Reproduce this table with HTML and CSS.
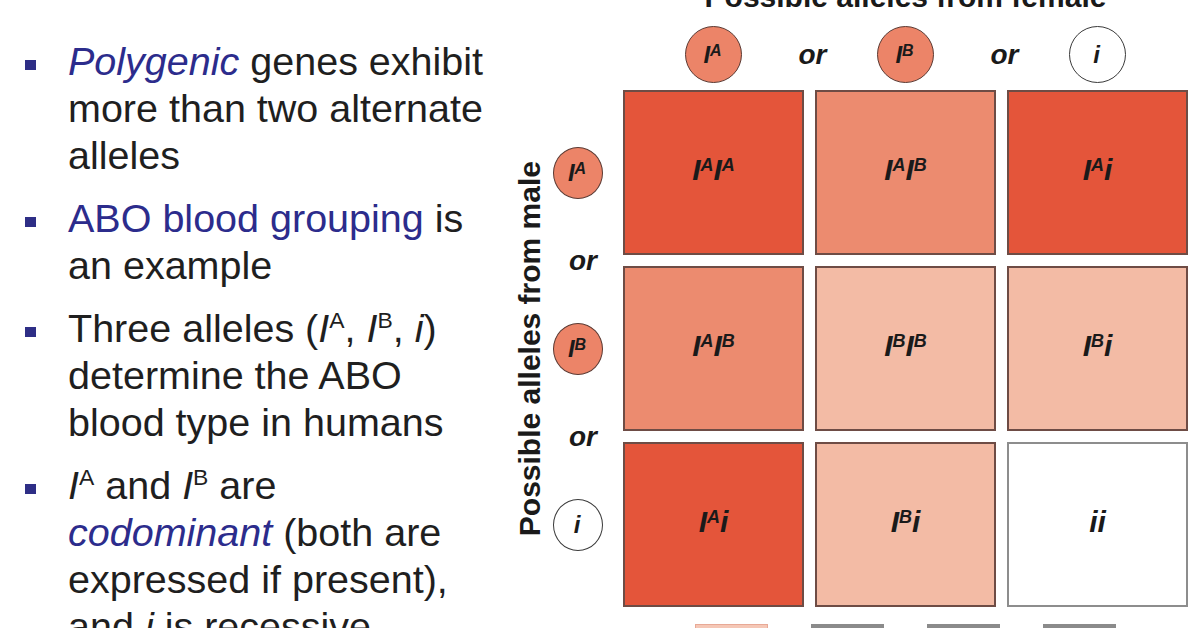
FILE: index.html
```html
<!DOCTYPE html>
<html lang="en">
<head>
<meta charset="utf-8">
<title>ABO blood grouping</title>
<link rel="stylesheet" href="styles.css">
</head>
<body>
<div class="slide">
  <ul class="points">
    <li class="point"><span class="bullet"></span><p class="text"><em class="key">Polygenic</em> genes exhibit<br>more than two alternate<br>alleles</p></li>
    <li class="point"><span class="bullet"></span><p class="text"><span class="key">ABO blood grouping</span> is<br>an example</p></li>
    <li class="point"><span class="bullet"></span><p class="text">Three alleles (<i>I</i><sup class="sup">A</sup>, <i>I</i><sup class="sup">B</sup>, <i>i</i>)<br>determine the ABO<br>blood type in humans</p></li>
    <li class="point"><span class="bullet"></span><p class="text"><i>I</i><sup class="sup">A</sup> and <i>I</i><sup class="sup">B</sup> are<br><em class="key">codominant</em> (both are<br>expressed if present),<br>and <i>i</i> is recessive</p></li>
  </ul>

  <div class="punnett">
    <div class="title">Possible alleles from female</div>

    <div class="top col1"><span class="allele red"><span class="lbl">I<sup class="asup">A</sup></span></span></div>
    <div class="top-or gap1"><span class="or">or</span></div>
    <div class="top col2"><span class="allele red"><span class="lbl">I<sup class="asup">B</sup></span></span></div>
    <div class="top-or gap2"><span class="or">or</span></div>
    <div class="top col3"><span class="allele white"><span class="lbl">i</span></span></div>

    <div class="male">Possible alleles from male</div>

    <div class="side row1"><span class="allele small red"><span class="lbl">I<sup class="asup">A</sup></span></span></div>
    <div class="side-or rgap1"><span class="or">or</span></div>
    <div class="side row2"><span class="allele small red"><span class="lbl">I<sup class="asup">B</sup></span></span></div>
    <div class="side-or rgap2"><span class="or">or</span></div>
    <div class="side row3"><span class="allele small white"><span class="lbl">i</span></span></div>

    <div class="cell row1 col1 dark"><span class="geno">I<sup class="csup">A</sup>I<sup class="csup">A</sup></span></div>
    <div class="cell row1 col2 mid"><span class="geno">I<sup class="csup">A</sup>I<sup class="csup">B</sup></span></div>
    <div class="cell row1 col3 dark"><span class="geno">I<sup class="csup">A</sup>i</span></div>

    <div class="cell row2 col1 mid"><span class="geno">I<sup class="csup">A</sup>I<sup class="csup">B</sup></span></div>
    <div class="cell row2 col2 light"><span class="geno">I<sup class="csup">B</sup>I<sup class="csup">B</sup></span></div>
    <div class="cell row2 col3 light"><span class="geno">I<sup class="csup">B</sup>i</span></div>

    <div class="cell row3 col1 dark"><span class="geno">I<sup class="csup">A</sup>i</span></div>
    <div class="cell row3 col2 light"><span class="geno">I<sup class="csup">B</sup>i</span></div>
    <div class="cell row3 col3 blank"><span class="geno">ii</span></div>

    <div class="legend">
      <span class="swatch pink"></span>
      <span class="swatch grey"></span>
      <span class="swatch grey"></span>
      <span class="swatch grey"></span>
    </div>
  </div>
</div>
</body>
</html>
```

FILE: styles.css
```css
html, body {
  margin: 0;
  padding: 0;
  width: 1196px;
  height: 628px;
  overflow: hidden;
  background: #ffffff;
}

.slide {
  display: flex;
  align-items: flex-start;
  width: 1196px;
  height: 628px;
  font-family: "Liberation Sans", Arial, sans-serif;
  color: #1f1f1f;
}

/* ---------- left text ---------- */
.points {
  flex: none;
  width: 505px;
  margin: 0;
  padding: 38px 0 0 25px;
  box-sizing: border-box;
  list-style: none;
  display: flex;
  flex-direction: column;
  gap: 16px;
}

.point {
  display: flex;
  align-items: flex-start;
  gap: 32px;
}

.bullet {
  flex: none;
  width: 11px;
  height: 10px;
  margin-top: 22px;
  background: #2e2e86;
}

.text {
  margin: 0;
  font-size: 39.5px;
  line-height: 47px;
  white-space: nowrap;
  color: #1f1f1f;
}

.key {
  color: #2c2c8c;
}

.sup {
  font-size: 0.58em;
  line-height: 0;
  vertical-align: 0.62em;
}

/* ---------- punnett square ---------- */
.punnett {
  flex: none;
  margin-top: -18px;
  display: grid;
  grid-template-columns: 48px 50px 20px 181px 11px 181px 11px 181px;
  grid-template-rows: 30px 78px 165px 11px 165px 11px 165px auto;
}

.title {
  grid-column: 4 / 9;
  grid-row: 1;
  text-align: center;
  font-weight: bold;
  font-size: 30px;
  line-height: 30px;
  white-space: nowrap;
  color: #1a1a1a;
}

.col1 { grid-column: 4; }
.col2 { grid-column: 6; }
.col3 { grid-column: 8; }
.gap1 { grid-column: 5; }
.gap2 { grid-column: 7; }
.row1 { grid-row: 3; }
.row2 { grid-row: 5; }
.row3 { grid-row: 7; }
.rgap1 { grid-row: 4; }
.rgap2 { grid-row: 6; }

.top {
  grid-row: 2;
  display: flex;
  justify-content: center;
  align-items: flex-end;
  padding-bottom: 7px;
}

.top-or {
  grid-row: 2;
  display: flex;
  justify-content: center;
  align-items: flex-end;
  padding-bottom: 7px;
  padding-left: 6px;
}

.top-or .or {
  height: 56px;
  line-height: 56px;
}

.side {
  grid-column: 2;
  display: flex;
  justify-content: center;
  align-items: center;
}

.side-or {
  grid-column: 2;
  display: flex;
  justify-content: center;
  align-items: center;
  padding-left: 10px;
}

.or {
  font-weight: bold;
  font-style: italic;
  font-size: 28px;
  color: #1a1a1a;
  white-space: nowrap;
}

.allele {
  box-sizing: border-box;
  width: 57px;
  height: 57px;
  border-radius: 50%;
  border: 1.5px solid #5b3a33;
  display: flex;
  justify-content: center;
  align-items: center;
  color: #1a1a1a;
}

.allele.small {
  width: 52px;
  height: 52px;
}

.allele.red {
  background: #ec8468;
}

.allele.white {
  background: #ffffff;
  border-color: #3a3a3a;
}

.lbl {
  display: block;
  font-weight: bold;
  font-style: italic;
  font-size: 24px;
  line-height: 24px;
  padding-right: 2px;
}

.asup {
  font-size: 16px;
  line-height: 0;
  vertical-align: 7px;
}

.male {
  grid-column: 1;
  grid-row: 3 / 8;
  align-self: center;
  justify-self: start;
  margin-left: 10px;
  writing-mode: vertical-rl;
  transform: rotate(180deg);
  font-weight: bold;
  font-size: 30px;
  line-height: 30px;
  white-space: nowrap;
  color: #1a1a1a;
}

.cell {
  box-sizing: border-box;
  border: 2px solid #6e4c45;
  display: flex;
  justify-content: center;
  align-items: center;
  padding-bottom: 6px;
}

.geno {
  display: block;
  font-weight: bold;
  font-style: italic;
  font-size: 30px;
  line-height: 30px;
  color: #1a1a1a;
}

.csup {
  font-size: 18px;
  line-height: 0;
  vertical-align: 9px;
}

.dark  { background: #e4553a; }
.mid   { background: #ec8b6f; }
.light { background: #f3bba5; }
.blank { background: #ffffff; border-color: #8d8d8d; }

.legend {
  grid-column: 4 / 9;
  grid-row: 8;
  display: flex;
  gap: 43px;
  padding: 17px 0 0 72px;
}

.swatch {
  width: 73px;
  height: 20px;
  box-sizing: border-box;
}

.swatch.pink { background: #f5c7b6; border: 1px solid #e8a996; }
.swatch.grey { background: #8b8b8b; }
```
